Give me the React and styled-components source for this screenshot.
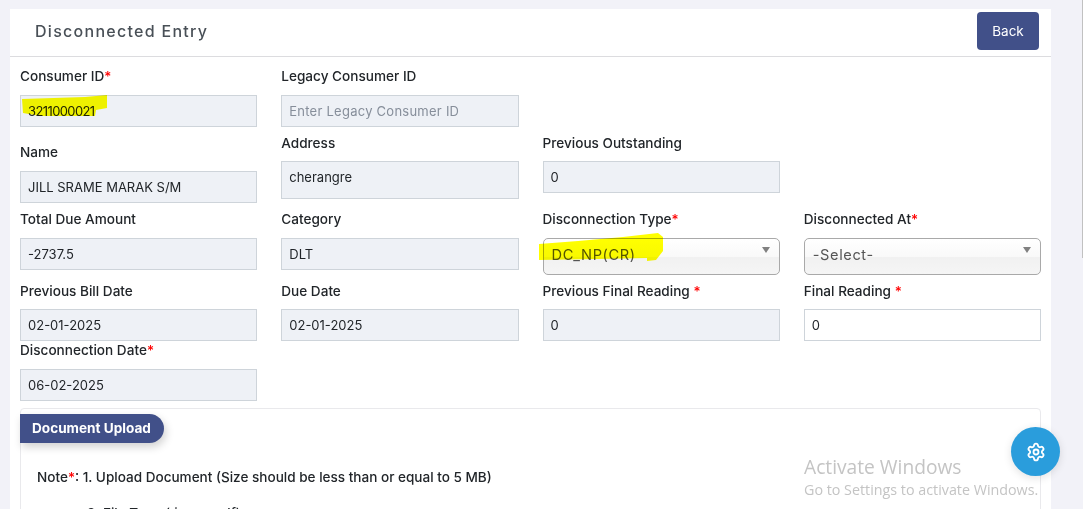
import React from 'react';
import styled, { createGlobalStyle } from 'styled-components';
import { Settings } from 'lucide-react';

const Global = createGlobalStyle`
  html, body {
    margin: 0;
    height: 100%;
    overflow: hidden;
    background: #f2f2f8;
    font-family: Inter, "Open Sans", "Liberation Sans", sans-serif;
    color: #212529;
  }
  * { box-sizing: border-box; }
`;

const Card = styled.div`
  margin: 9px 32px 0 10px;
  background: #fff;
  height: 800px;
`;

const Header = styled.div`
  height: 48px;
  padding: 3px 12px 0 25px;
  display: flex;
  justify-content: space-between;
  align-items: flex-start;
  border-bottom: 1px solid #dcdcdf;
`;

const Title = styled.h4`
  margin: 0;
  padding-top: 9px;
  font-size: 16px;
  line-height: 20px;
  font-weight: 500;
  letter-spacing: 1.28px;
  color: #495057;
`;

const BackButton = styled.button`
  width: 62px;
  height: 38px;
  border: none;
  border-radius: 4px;
  background: #415089;
  color: #fff;
  font: 400 13.5px Inter, sans-serif;
`;

const Form = styled.div`
  padding: 9px 10px 0;
`;

const Row = styled.div`
  display: grid;
  grid-template-columns: repeat(4, 1fr);
  column-gap: 24px;
  margin-bottom: ${p => p.$gap ?? 6}px;
`;

const Field = styled.div`
  position: relative;
  padding-top: ${p => p.$drop || 0}px;
`;

const Label = styled.label`
  display: block;
  height: 20px;
  margin-bottom: ${p => (p.$tight ? 8 : 9)}px;
  font-size: 13.6px;
  line-height: 20px;
  font-weight: 450;
  color: #212529;
  white-space: nowrap;
`;

const Star = styled.span`
  color: #f00;
`;

const Input = styled.input`
  display: block;
  width: 100%;
  height: ${p => p.$height || 32}px;
  padding: 0 7px ${p => (p.$height ? 6 : 0)}px;
  border: 1px solid #ced4da;
  background: ${p => (p.$editable ? '#fff' : '#eef1f6')};
  font: 400 13px Inter, sans-serif;
  letter-spacing: ${p => (p.$narrow ? '-0.6px' : 'normal')};
  color: #212529;
  outline: none;
  &::placeholder {
    color: #868e9a;
    opacity: 1;
    letter-spacing: 0.25px;
  }
`;

const SelectWrap = styled.div`
  position: relative;
  &::after {
    content: '';
    position: absolute;
    right: 10px;
    top: 9px;
    border-left: 4px solid transparent;
    border-right: 4px solid transparent;
    border-top: 6px solid #808080;
  }
`;

const Select = styled.select`
  display: block;
  width: 100%;
  height: 37px;
  padding: 0 8px 3px;
  appearance: none;
  border: 1px solid #a9a9a9;
  border-radius: 5px;
  background: linear-gradient(#fff 0%, #f9f9f9 50%, #f1f1f1 52%, #f5f5f5 100%);
  font: 400 14.6px Inter, sans-serif;
  letter-spacing: 0.6px;
  color: #555;
  outline: none;
`;

const Marker = styled.svg`
  position: absolute;
  pointer-events: none;
  mix-blend-mode: multiply;
  left: ${p => p.$left}px;
  top: ${p => p.$top}px;
`;

const UploadPanel = styled.div`
  margin-top: 7px;
  height: 300px;
  border: 1px solid #e9e9ec;
  border-radius: 4px;
  padding-top: 5px;
`;

const Badge = styled.div`
  display: inline-block;
  margin-left: -1px;
  height: 29px;
  width: 144px;
  padding-left: 12px;
  border-radius: 0 15px 15px 0;
  background: #415089;
  color: #fff;
  font-size: 13.6px;
  font-weight: 700;
  line-height: 29px;
  box-shadow: 2px 4px 8px rgba(0, 0, 0, 0.18);
  white-space: nowrap;
`;

const Notes = styled.div`
  padding: 16px 0 0 16px;
  font-size: 13.55px;
  line-height: 36px;
  font-weight: 450;
`;

const NoteLine = styled.div`
  padding-left: ${p => p.$indent || 0}px;
  white-space: nowrap;
`;

const Fab = styled.div`
  position: fixed;
  left: 1011px;
  top: 427px;
  width: 49px;
  height: 49px;
  border-radius: 50%;
  background: #2a9ddc;
  color: #fff;
  display: flex;
  align-items: center;
  justify-content: center;
  box-shadow: 0 2px 8px rgba(0, 0, 0, 0.12);
`;

const Watermark = styled.div`
  position: fixed;
  left: 804px;
  top: 454px;
  color: #c4c4c4;
  font-family: "Open Sans", sans-serif;
  white-space: nowrap;
  pointer-events: none;
`;

const WatermarkTitle = styled.div`
  font-size: 19.2px;
  line-height: 26px;
`;

const WatermarkText = styled.div`
  font-size: 14.3px;
  line-height: 19px;
`;

const ScrollThumb = styled.div`
  position: fixed;
  right: 0;
  top: 0;
  width: 1px;
  height: 258px;
  background: #c1c1c1;
`;

const Req = () => <Star>*</Star>;

const TextField = ({ label, required, value, placeholder, drop, height, editable, tight, narrow, children }) => (
  <Field $drop={drop}>
    <Label $tight={tight}>{label}{required && <Req />}</Label>
    <Input
      readOnly
      defaultValue={value}
      placeholder={placeholder}
      $height={height}
      $editable={editable}
      $narrow={narrow}
    />
    {children}
  </Field>
);

const SelectField = ({ label, value, children }) => (
  <Field>
    <Label>{label}<Req /></Label>
    <SelectWrap>
      <Select defaultValue={value}>
        <option>{value}</option>
      </Select>
    </SelectWrap>
    {children}
  </Field>
);

export default function App() {
  return (
    <>
      <Global />
      <Card>
        <Header>
          <Title>Disconnected Entry</Title>
          <BackButton>Back</BackButton>
        </Header>
        <Form>
          <Row>
            <TextField label="Consumer ID" required value="3211000021" narrow>
              <Marker $left={1} $top={29} width="90" height="24">
                <polygon points="1,4 64,2 86,0 86,13 75,15 74,21 19,21 2,18" fill="#ffff00" />
              </Marker>
            </TextField>
            <TextField label="Legacy Consumer ID" placeholder="Enter Legacy Consumer ID" />
          </Row>
          <Row>
            <TextField label="Name" value="JILL SRAME MARAK S/M" drop={9} />
            <TextField label="Address" value="cherangre" height={38} tight />
            <TextField label="Previous Outstanding" value="0" tight />
          </Row>
          <Row>
            <TextField label="Total Due Amount" value="-2737.5" />
            <TextField label="Category" value="DLT" />
            <SelectField label="Disconnection Type" value="DC_NP(CR)">
              <Marker $left={-5} $top={24} width="130" height="30">
                <polygon points="1,11 40,8 85,4 120,0 125,4 125,18 118,27 109,28 109,25 60,26 1,27" fill="#ffff00" />
              </Marker>
            </SelectField>
            <SelectField label="Disconnected At" value="-Select-" />
          </Row>
          <Row $gap={-1}>
            <TextField label="Previous Bill Date" value="02-01-2025" tight />
            <TextField label="Due Date" value="02-01-2025" tight />
            <TextField label="Previous Final Reading " required value="0" tight />
            <TextField label="Final Reading " required value="0" editable tight />
          </Row>
          <Row $gap={0}>
            <TextField label="Disconnection Date" required value="06-02-2025" />
          </Row>
          <UploadPanel>
            <Badge>Document Upload</Badge>
            <Notes>
              <NoteLine>Note<Req />: 1. Upload Document (Size should be less than or equal to 5 MB)</NoteLine>
              <NoteLine $indent={50}>2. File Type (.jpeg, .pdf)</NoteLine>
            </Notes>
          </UploadPanel>
        </Form>
      </Card>
      <Watermark>
        <WatermarkTitle>Activate Windows</WatermarkTitle>
        <WatermarkText>Go to Settings to activate Windows.</WatermarkText>
      </Watermark>
      <Fab><Settings size={20} strokeWidth={2.2} /></Fab>
      <ScrollThumb />
    </>
  );
}
